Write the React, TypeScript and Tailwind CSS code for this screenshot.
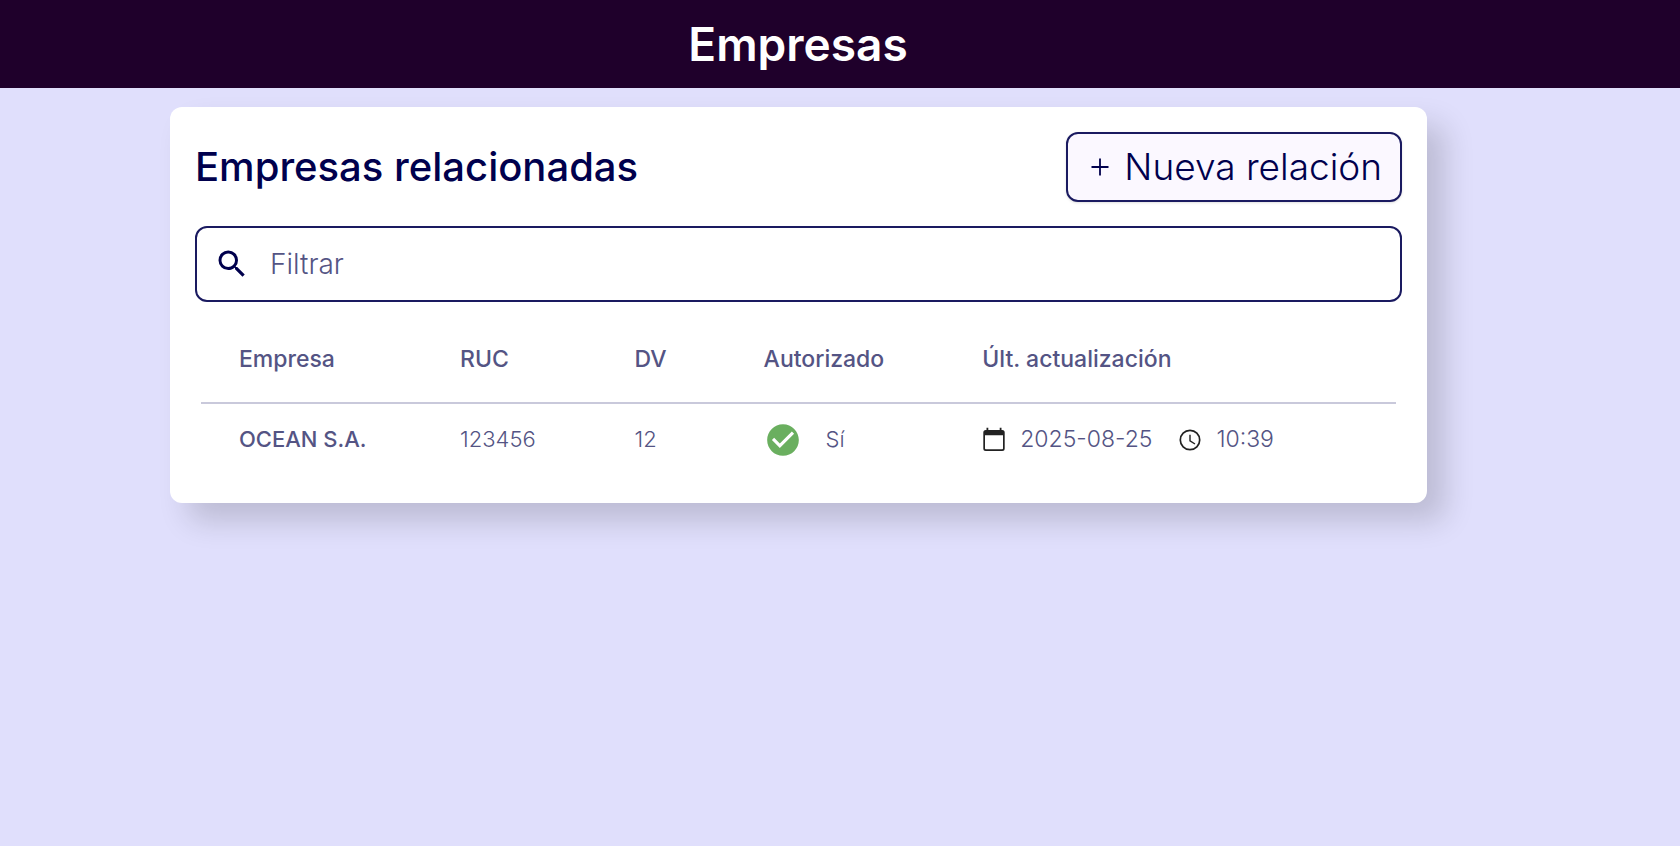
import React from "react";
import { MdSearch, MdCheckCircle } from "react-icons/md";

const companies = [
  { name: "OCEAN S.A.", ruc: "123456", dv: "12", authorized: true, date: "2025-08-25", time: "10:39" },
];

function CalendarIcon() {
  return (
    <svg viewBox="0 0 24 26" className="h-[26px] w-6 shrink-0" aria-hidden="true">
      <path
        fill="#222222"
        d="M4.500 .800h1.800v2.200h11.400V.800h1.800V3h.700a2.500 2.500 0 0 1 2.500 2.500v16a2.500 2.500 0 0 1-2.500 2.500H3.800a2.500 2.500 0 0 1-2.500-2.500v-16A2.500 2.500 0 0 1 3.800 3h.700V.800zM3 8.200V21.500c0 .500.400.800.800.800h16.400c.500 0 .800-.400.800-.800V8.200H3z"
      />
    </svg>
  );
}

function ClockIcon() {
  return (
    <svg viewBox="0 0 24 24" className="size-6 shrink-0" fill="none" stroke="#222222" aria-hidden="true">
      <circle cx="12" cy="12" r="9.700" strokeWidth="1.700" />
      <path d="M12 6.800v6l5 3.200" strokeWidth="1.400" />
    </svg>
  );
}

export default function App() {
  return (
    <div className="min-h-screen bg-[#e0dffc] font-['Inter',sans-serif] text-[#00004d]">
      <header className="flex h-22 items-center justify-center bg-[#1f002b] pr-[84px]">
        <h1 className="text-[46px] font-semibold text-white">Empresas</h1>
      </header>
      <main className="pt-[19px] pr-[253px] pl-[170px]">
        <section className="rounded-xl bg-white px-[25px] pt-[25px] pb-7 shadow-[18px_18px_30px_rgba(0,0,0,0.16)]">
          <div className="flex items-center justify-between">
            <h2 className="text-[40px] leading-[68px] font-medium">Empresas relacionadas</h2>
            <button
              type="button"
              className="flex h-[70px] items-center gap-[14px] rounded-xl border-2 border-[#1a1a60] bg-[#fbf8ff] px-[18px] pl-[22px] text-[37px] font-light shadow-sm"
            >
              <svg viewBox="0 0 20 20" className="size-5" stroke="currentColor" strokeWidth="1.800" aria-hidden="true">
                <path d="M10 1.500v17M1.500 10h17" />
              </svg>
              Nueva relación
            </button>
          </div>
          <label className="mt-6 flex h-[76px] items-center gap-5 rounded-xl border-2 border-[#1a1a60] px-[17px]">
            <MdSearch className="size-9 shrink-0" aria-hidden="true" />
            <input
              type="text"
              aria-label="Filtrar"
              placeholder="Filtrar"
              className="min-w-0 flex-1 bg-transparent text-[28px] font-light outline-none placeholder:text-[#545484]"
            />
          </label>
          <div className="mt-[17px] px-[6px]">
            <table className="w-full table-fixed text-left text-[22px] text-[#545484]">
              <colgroup>
                <col className="w-[18.500%]" />
                <col className="w-[14.600%]" />
                <col className="w-[10.800%]" />
                <col className="w-[18.300%]" />
                <col />
              </colgroup>
              <thead className="text-[23px]">
                <tr className="h-[84px] border-b-2 border-[#c9c9db]">
                  <th className="pb-[2px] pl-[38px] font-medium">Empresa</th>
                  <th className="pb-[2px] pl-[38px] font-medium">RUC</th>
                  <th className="pb-[2px] pl-[38px] font-medium">DV</th>
                  <th className="pb-[2px] pl-[38px] font-medium">Autorizado</th>
                  <th className="pb-[2px] pl-[38px] font-medium">Últ. actualización</th>
                </tr>
              </thead>
              <tbody className="font-light">
                {companies.map((c) => (
                  <tr key={c.ruc} className="h-[72px]">
                    <td className="pl-[38px] font-medium">{c.name}</td>
                    <td className="pl-[38px]">{c.ruc}</td>
                    <td className="pl-[38px]">{c.dv}</td>
                    <td className="pl-[38px]">
                      <span className="flex items-center gap-6">
                        <MdCheckCircle className="size-[38px] text-[#6aaf5f]" aria-hidden="true" />
                        {c.authorized ? "Sí" : "No"}
                      </span>
                    </td>
                    <td className="pl-[38px] text-[23px]">
                      <span className="flex items-center">
                        <CalendarIcon />
                        <time className="ml-[14px]">{c.date}</time>
                        <span className="ml-[26px]">
                          <ClockIcon />
                        </span>
                        <time className="ml-[14px]">{c.time}</time>
                      </span>
                    </td>
                  </tr>
                ))}
              </tbody>
            </table>
          </div>
        </section>
      </main>
    </div>
  );
}
